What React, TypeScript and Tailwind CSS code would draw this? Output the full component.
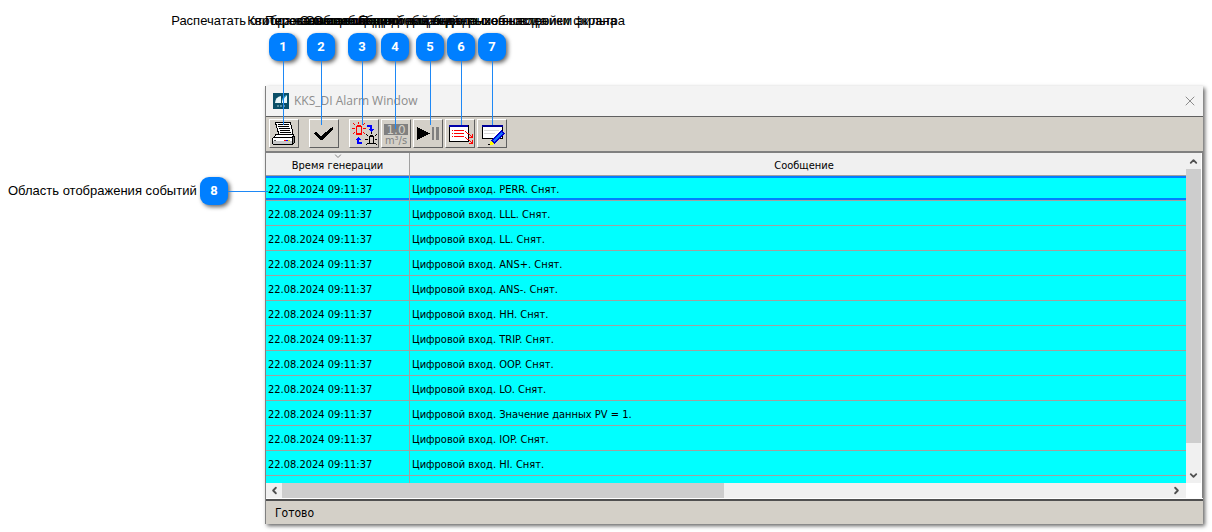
import React from 'react';
import { ChevronDown, ChevronLeft, ChevronRight, ChevronUp, X } from 'lucide-react';

interface Callout {
  id: number;
  label: string;
  position: string;
  line: string;
}

interface AlarmEvent {
  time: string;
  message: string;
}

const callouts: Callout[] = [
  { id: 1, label: 'Распечатать отображаемые события', position: 'left-[269px]', line: 'h-16' },
  { id: 2, label: 'Квитировать сообщения', position: 'left-[307px]', line: 'h-16' },
  { id: 3, label: 'Переключение вида сообщений', position: 'left-[348px]', line: 'h-16' },
  { id: 4, label: 'Сообщение о единицах данных', position: 'left-[381px]', line: 'h-[68px]' },
  { id: 5, label: 'Остановка или возобновление вывода', position: 'left-[416px]', line: 'h-16' },
  { id: 6, label: 'Список событий для вывода с обновлением экрана', position: 'left-[447px]', line: 'h-16' },
  { id: 7, label: 'Подробный вид и вызов настройки фильтра', position: 'left-[478px]', line: 'h-16' },
];

const time = '22.08.2024 09:11:37';

const events: AlarmEvent[] = [
  { time, message: 'Цифровой вход. PERR. Снят.' },
  { time, message: 'Цифровой вход. LLL. Снят.' },
  { time, message: 'Цифровой вход. LL. Снят.' },
  { time, message: 'Цифровой вход. ANS+. Снят.' },
  { time, message: 'Цифровой вход. ANS-. Снят.' },
  { time, message: 'Цифровой вход. HH. Снят.' },
  { time, message: 'Цифровой вход. TRIP. Снят.' },
  { time, message: 'Цифровой вход. OOP. Снят.' },
  { time, message: 'Цифровой вход. LO. Снят.' },
  { time, message: 'Цифровой вход. Значение данных PV = 1.' },
  { time, message: 'Цифровой вход. IOP. Снят.' },
  { time, message: 'Цифровой вход. HI. Снят.' },
];

const Badge: React.FC<{ id: number }> = ({ id }) => (
  <span className="flex h-7 w-7 shrink-0 items-center justify-center rounded-[9px] bg-[#007fff] font-[Roboto,sans-serif] text-[13px] font-bold text-white shadow-[2px_2px_4px_rgba(0,0,0,0.6)]">
    {id}
  </span>
);

const ToolButton: React.FC<{ label: string; className?: string; children: React.ReactNode }> = ({ label, className = '', children }) => (
  <button
    aria-label={label}
    className={`h-[29px] w-[30px] shrink-0 border border-t-white border-l-white border-r-[#606060] border-b-[#606060] bg-[#d4d0c8] ${className}`}
  >
    <svg viewBox="1 1 28 27" className="block h-[27px] w-7" shapeRendering="crispEdges">
      {children}
    </svg>
  </button>
);

const PrinterIcon = () => (
  <>
    <path d="M6 3h16v3h1v4h1v5h1v1H9v-3H8v-4H7V6H6z" fill="#000" />
    <path d="M7 4h14v2h1v4h1v5H10v-3H9V9H8V5H7z" fill="#fff" />
    <path d="M9 5h11v1H9zM9 7h11v1H9zM10 9h11v1H10zM11 11h10v1H11zM11 13h11v1H11z" fill="#000" />
    <path d="M6 15h3v1h16v1h1v7h-1v1h-1v1H4v-1H3v-6h1v-1h1v-1h1z" fill="#000" />
    <path d="M7 16h17v1h-1v1H6v-1h1z" fill="#fff" />
    <path d="M4 19h19v3H4z" fill="#fff" />
    <path d="M4 22h19v3H4z" fill="#c8c8c8" />
    <path d="M24 18h1v6h-1z" fill="#808080" />
    <path d="M15 21h2v1h-2z" fill="#f00" />
    <path d="M17 21h2v1h-2z" fill="#00f" />
    <path d="M19 21h2v1h-2z" fill="#dd0" />
    <path d="M5 21h2v1H5z" fill="#555" />
  </>
);

const AckIcon = () => <path d="M5 14l2-1 5 4L22 9l2-1v2L13 21h-2z" fill="#000" />;

const SwitchIcon = () => (
  <>
    <path d="M7 7h1V6h4v1h1v8H7zM8 8v6h4V8z" fill="#f00" fillRule="evenodd" />
    <path d="M7 14h6v2H7z" fill="#f00" />
    <path d="M9 3h1v2H9zM4 4h1v1h1v1H5V5H4zM14 5h1V4h1v1h-1v1h-1zM3 9h3v1H3zM14 9h3v1h-3zM4 14h1v-1h1v1H5v1H4zM14 13h1v1h1v1h-1v-1h-1z" fill="#f00" />
    <path d="M18 6h5v4h2v1h-1v1h-1v1h-1v-1h-1v-1h-1v-1h1V8h-3z" fill="#00f" />
    <path d="M9 18h1v1h1v1h1v1h-2v2h3v2H8v-4H7v-1h1v-1h1z" fill="#00f" />
    <path d="M20 17h1v-1h3v1h1v8h-5zM21 18v6h3v-6z" fill="#000" fillRule="evenodd" />
    <path d="M19 24h7v1h-7z" fill="#000" />
    <path d="M22 13h1v2h-1zM17 15h1v1h1v1h-1v-1h-1zM26 16h1v-1h1v1h-1v1h-1zM16 20h3v1h-3zM26 20h2v1h-2zM17 25h1v-1h1v1h-1v1h-1zM26 24h1v1h1v1h-1v-1h-1z" fill="#000" />
  </>
);

const UnitsIcon = () => (
  <>
    <path d="M3 5h24v11H3z" fill="#808080" />
    <text x="15" y="15" textAnchor="middle" fontSize="12" fill="#d4d0c8" fontFamily="'DejaVu Sans', sans-serif">1.0</text>
    <text x="15" y="25" textAnchor="middle" fontSize="11" fill="#808080" fontFamily="'DejaVu Sans Condensed', sans-serif">m³/s</text>
  </>
);

const PauseIcon = () => (
  <>
    <path d="M4 8l13 6.500L4 21z" fill="#000" />
    <path d="M19 8h2v13h-2zM23 8h3v13h-3z" fill="#808080" />
  </>
);

const ListIcon = () => (
  <>
    <path d="M4 6h20v17H4z" fill="#000" />
    <path d="M5 8h18v14H5z" fill="#fff" />
    <path d="M4 6h19v2H4z" fill="#00a" />
    <path d="M7 11h1v1H7zM9 11h10v1H9zM7 14h1v1H7zM9 14h10v1H9zM7 17h1v1H7zM9 17h10v1H9z" fill="#f00" />
    <path d="M20 12h1v1h1v1h2v1h1v1h1v1h1v-2h1v4h-4v-1h2v-1h-1v-1h-1v-1h-2v-1h-1v-1h-1zM20 18h1v1h1v1h2v1h1v1h1v1h1v-2h1v4h-4v-1h2v-1h-1v-1h-1v-1h-2v-1h-1v-1h-1z" fill="#f00" />
  </>
);

const FilterIcon = () => (
  <>
    <path d="M5 6h21v14H5z" fill="#000" />
    <path d="M6 8h19v11H6z" fill="#fff" />
    <path d="M5 6h21v2H5z" fill="#009" />
    <path d="M7 11h15v1H7zM7 14h11v1H7z" fill="#d8d8d8" />
    <path d="M24 11l4 3-10 11-4-3z" fill="#00c" />
    <path d="M24 13l2 1-8 9-2-1z" fill="#1473ff" />
    <path d="M14 22l4 3-4 1h-2z" fill="#ff0" />
    <path d="M11 25h2v1h-2z" fill="#000" />
  </>
);

const AppLogo = () => (
  <svg viewBox="0 0 16 16" className="h-4 w-4">
    <path d="M0 0h16v16H0z" fill="#0a4f68" />
    <path d="M2 10a7 7 0 0 1 6-7v7z" fill="#e9f7fa" />
    <path d="M9 10V7l5-5v8z" fill="#e9f7fa" />
    <path d="M9 6l4-4h1l-5 6z" fill="#45b3cc" />
    <path d="M4 12h2v2H4zM7 12h2v2H7zM10 12h2v2h-2z" fill="#5d91a1" />
  </svg>
);

const App: React.FC = () => {
  return (
    <div className="relative bg-white pt-[86px] pr-[9px] pb-2 pl-[265px] font-['DejaVu_Sans_Condensed','DejaVu_Sans',sans-serif] text-black">
      <section className="border-l border-[#808080] bg-white shadow-[2px_2px_4px_rgba(0,0,0,0.6)]">
        <header className="flex h-[30px] items-center gap-[5px] bg-[#f3f3f3] pr-[5px] pl-[7px]">
          <AppLogo />
          <h1 className="grow font-['Open_Sans',sans-serif] text-xs text-[#8c8c8c]">KKS_DI Alarm Window</h1>
          <button aria-label="Закрыть" className="text-[#8c8c8c]">
            <X size={16} strokeWidth={1.5} />
          </button>
        </header>

        <div className="flex h-[37px] border-t border-b-2 border-t-[#606060] border-b-[#808080] bg-[#d4d0c8] pt-0.5 pl-[3px]">
          <ToolButton label="Печать"><PrinterIcon /></ToolButton>
          <ToolButton label="Квитировать" className="ml-2.5"><AckIcon /></ToolButton>
          <div className="ml-2.5 flex gap-0.5">
            <ToolButton label="Переключить"><SwitchIcon /></ToolButton>
            <ToolButton label="Единицы"><UnitsIcon /></ToolButton>
            <ToolButton label="Пауза"><PauseIcon /></ToolButton>
            <ToolButton label="Список"><ListIcon /></ToolButton>
            <ToolButton label="Фильтр"><FilterIcon /></ToolButton>
          </div>
        </div>

        <div className="flex border-r border-[#808080] pr-px">
          <div className="min-w-0 grow">
            <table className="w-full table-fixed border-separate border-spacing-0 text-[11px] leading-4">
              <thead>
                <tr className="h-[23px] bg-[#f0f0f0]">
                  <th className="relative w-[144px] border-r border-b border-[#a0a0a0] p-0 pt-1 font-normal">
                    <svg viewBox="0 0 7 4" className="absolute top-px left-1/2 h-1 w-[7px] -translate-x-1/2">
                      <path d="M0.500 0.500l3 3 3-3" fill="none" stroke="#808080" />
                    </svg>
                    Время генерации
                  </th>
                  <th className="border-b border-[#a0a0a0] p-0 pt-1 pl-3 font-normal">Сообщение</th>
                </tr>
              </thead>
              <tbody className="bg-[#00ffff]">
                {events.map((event, i) => (
                  <tr key={event.message} className={i === 0 ? 'h-[25px] shadow-[inset_0_2px_#007fff,inset_0_-3px_#007fff]' : 'h-[25px]'}>
                    <td className="border-r border-b border-[#a0a0a0] p-0 pt-1 pl-0.5 whitespace-nowrap">{event.time}</td>
                    <td className="border-b border-[#a0a0a0] p-0 pt-1 pl-0.5 whitespace-nowrap">{event.message}</td>
                  </tr>
                ))}
                <tr className="h-[7px]">
                  <td className="border-r border-[#a0a0a0] p-0" />
                  <td className="p-0" />
                </tr>
              </tbody>
            </table>
            <div className="flex h-[15px] bg-[#f0f0f0] text-[#505050]">
              <button aria-label="Влево" className="flex w-4 items-center justify-center"><ChevronLeft size={11} strokeWidth={4} /></button>
              <div className="grow">
                <div className="h-full w-1/2 bg-[#cdcdcd]" />
              </div>
              <button aria-label="Вправо" className="flex w-5 items-center justify-center"><ChevronRight size={11} strokeWidth={4} /></button>
            </div>
          </div>
          <div className="mb-[15px] flex w-[15px] shrink-0 flex-col bg-[#f0f0f0] text-[#505050]">
            <button aria-label="Вверх" className="flex h-4 items-center justify-center"><ChevronUp size={11} strokeWidth={4} /></button>
            <div className="grow">
              <div className="h-[92%] bg-[#cdcdcd]" />
            </div>
            <button aria-label="Вниз" className="flex h-4 items-center justify-center"><ChevronDown size={11} strokeWidth={4} /></button>
          </div>
        </div>

        <footer className="mt-px flex h-[25px] items-center border-t-2 border-[#505050] bg-[#d4d0c8] pl-[9px] text-xs">Готово</footer>
      </section>

      {callouts.map(callout => (
        <div key={callout.id} className={`pointer-events-none absolute top-[13px] flex w-7 flex-col items-center ${callout.position}`}>
          <span className="mb-1 font-['Liberation_Sans',sans-serif] text-[13px] leading-4 whitespace-nowrap">{callout.label}</span>
          <Badge id={callout.id} />
          <span className={`w-px bg-[#1e88f5] ${callout.line}`} />
        </div>
      ))}

      <div className="pointer-events-none absolute top-[177px] left-2 flex items-center">
        <span className="w-48 font-['Liberation_Sans',sans-serif] text-[13px] whitespace-nowrap">Область отображения событий</span>
        <Badge id={8} />
        <span className="h-px w-10 bg-[#1e88f5]" />
      </div>
    </div>
  );
};

export default App;
